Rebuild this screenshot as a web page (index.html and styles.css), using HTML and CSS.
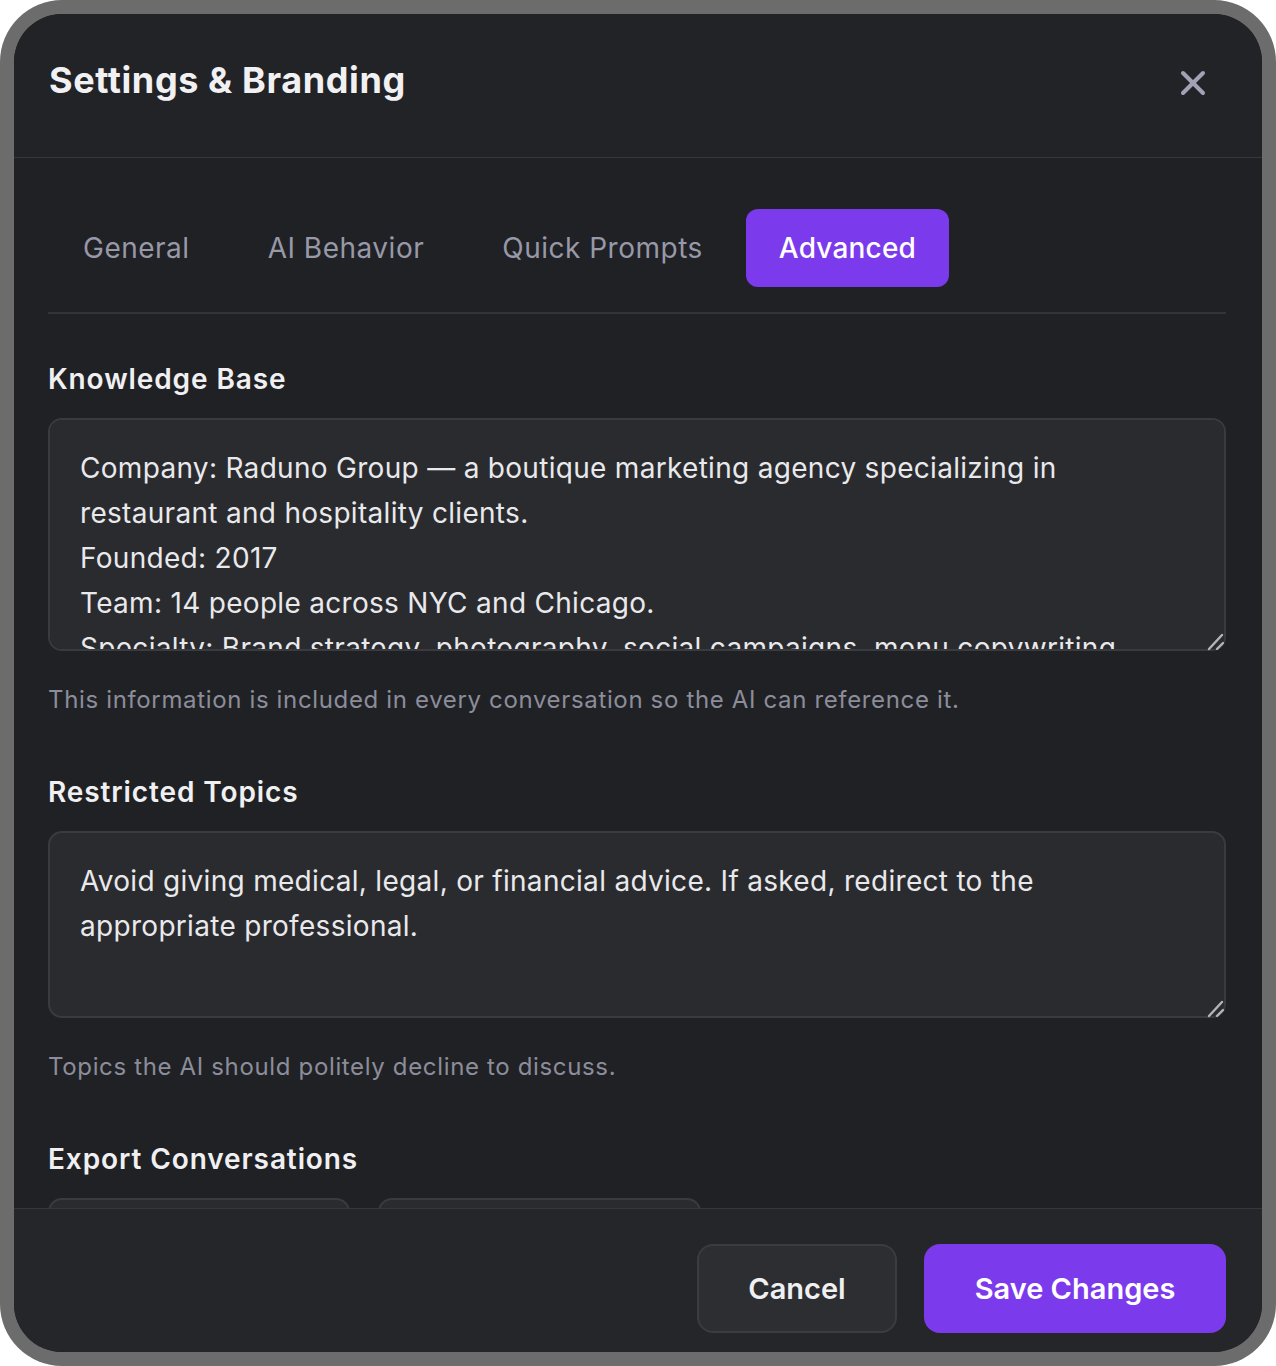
FILE: index.html
```html
<!DOCTYPE html>
<html lang="en">
<head>
    <meta charset="UTF-8">
    <meta name="viewport" content="width=device-width, initial-scale=1.0">
    <title>Settings &amp; Branding</title>
    <link rel="stylesheet" href="styles.css">
</head>
<body>
    <div class="frame">
        <div class="modal">
            <div class="modal-header">
                <h1 class="modal-title">Settings &amp; Branding</h1>
                <button class="close-btn" aria-label="Close">
                    <svg width="26" height="26" viewBox="0 0 26 26" fill="none" stroke="currentColor" stroke-width="4" stroke-linecap="round">
                        <line x1="3" y1="3" x2="23" y2="23"/>
                        <line x1="23" y1="3" x2="3" y2="23"/>
                    </svg>
                </button>
            </div>

            <div class="modal-body">
                <div class="tabs">
                    <button class="tab">General</button>
                    <button class="tab">AI Behavior</button>
                    <button class="tab">Quick Prompts</button>
                    <button class="tab active">Advanced</button>
                </div>

                <div class="field first">
                    <label class="field-label" for="kb">Knowledge Base</label>
                    <div class="input-wrap">
                        <textarea id="kb" class="field-input kb">Company: Raduno Group — a boutique marketing agency specializing in restaurant and hospitality clients.
Founded: 2017
Team: 14 people across NYC and Chicago.
Specialty: Brand strategy, photography, social campaigns, menu copywriting.
Tone: Warm, confident, never salesy.</textarea>
                        <svg class="grip" width="20" height="20" viewBox="0 0 20 20" fill="none" stroke="currentColor" stroke-width="2.4" stroke-linecap="round">
                            <line x1="4" y1="18" x2="17" y2="4"/>
                            <line x1="12" y1="18" x2="18" y2="12"/>
                        </svg>
                    </div>
                    <p class="field-help">This information is included in every conversation so the AI can reference it.</p>
                </div>

                <div class="field">
                    <label class="field-label" for="restricted">Restricted Topics</label>
                    <div class="input-wrap">
                        <textarea id="restricted" class="field-input restricted">Avoid giving medical, legal, or financial advice. If asked, redirect to the appropriate professional.</textarea>
                        <svg class="grip" width="20" height="20" viewBox="0 0 20 20" fill="none" stroke="currentColor" stroke-width="2.4" stroke-linecap="round">
                            <line x1="4" y1="18" x2="17" y2="4"/>
                            <line x1="12" y1="18" x2="18" y2="12"/>
                        </svg>
                    </div>
                    <p class="field-help">Topics the AI should politely decline to discuss.</p>
                </div>

                <div class="field">
                    <div class="field-label">Export Conversations</div>
                    <div class="export-row">
                        <button class="export-btn wide-a">JSON</button>
                        <button class="export-btn wide-b">Markdown</button>
                    </div>
                </div>
            </div>

            <div class="modal-footer">
                <button class="btn btn-secondary">Cancel</button>
                <button class="btn btn-primary">Save Changes</button>
            </div>
        </div>
    </div>
</body>
</html>
```

FILE: styles.css
```css
* {
    box-sizing: border-box;
}

body {
    margin: 0;
    background: #ffffff;
    font-family: Inter, "Noto Sans", sans-serif;
}

.frame {
    width: 1276px;
    height: 1366px;
    padding: 14px;
    background: #6c6c6c;
    border-radius: 62px;
}

.modal {
    height: 100%;
    display: flex;
    flex-direction: column;
    background: #202124;
    border-radius: 48px;
    overflow: hidden;
}

/* header */
.modal-header {
    height: 144px;
    flex-shrink: 0;
    display: flex;
    justify-content: space-between;
    align-items: flex-start;
    padding: 44px 36px 0 35px;
    background: #222326;
    border-bottom: 1px solid #36373b;
}

.modal-title {
    margin: 0;
    font-size: 36px;
    line-height: 44px;
    font-weight: 700;
    color: #f1f1f3;
    letter-spacing: 0.6px;
}

.close-btn {
    margin-top: 12px;
    margin-right: 20px;
    padding: 0;
    width: 26px;
    height: 26px;
    background: none;
    border: none;
    color: #a2a2b6;
    cursor: pointer;
}

/* body */
.modal-body {
    flex: 1;
    overflow: hidden;
    padding: 51px 36px 0 34px;
}

.tabs {
    display: flex;
    gap: 8px;
    padding-bottom: 25px;
    border-bottom: 2px solid #333438;
}

.tab {
    height: 78px;
    padding: 0 35px;
    background: none;
    border: none;
    border-radius: 12px;
    font-family: inherit;
    font-size: 28px;
    font-weight: 400;
    letter-spacing: 0.5px;
    color: #9798a8;
    cursor: pointer;
}

.tab.active {
    padding: 0 33px;
    background: #7c3aed;
    color: #ffffff;
    font-weight: 500;
    letter-spacing: 0.2px;
}

.field {
    margin-top: 58px;
}

.field.first {
    margin-top: 47px;
}

.field-label {
    display: block;
    font-size: 28px;
    line-height: 36px;
    font-weight: 600;
    letter-spacing: 0.9px;
    color: #f0f0f2;
    margin-bottom: 21px;
}

.input-wrap {
    position: relative;
}

.field-input {
    display: block;
    width: 100%;
    padding: 26px 50px 24px 30px;
    background: #2a2b2e;
    border: 2px solid #3a3b3f;
    border-radius: 14px;
    font-family: inherit;
    font-size: 28px;
    line-height: 45px;
    letter-spacing: 0.3px;
    color: #e9e9ec;
    scrollbar-width: none;
    outline: none;
    resize: none;
}

.field-input.kb {
    height: 233px;
}

.field-input.restricted {
    height: 187px;
}

/* resize grip drawn over the textarea corner */
.grip {
    position: absolute;
    right: 1px;
    bottom: 0;
    color: #b4b4b8;
    pointer-events: none;
}

.field-help {
    margin: 33px 0 0;
    font-size: 24px;
    line-height: 32px;
    letter-spacing: 0.65px;
    color: #8c8d9b;
}

.export-row {
    display: flex;
    gap: 28px;
}

.export-btn {
    height: 80px;
    padding: 0 40px;
    background: #2a2b2e;
    border: 2px solid #3a3b3f;
    border-radius: 14px;
    font-family: inherit;
    font-size: 28px;
    color: #e9e9ec;
}

.export-btn.wide-a {
    width: 302px;
}

.export-btn.wide-b {
    width: 323px;
}

/* footer */
.modal-footer {
    flex-shrink: 0;
    display: flex;
    justify-content: flex-end;
    gap: 27px;
    padding: 35px 36px 19px 34px;
    background: #252629;
    border-top: 1px solid #36373b;
}

.btn {
    height: 89px;
    border-radius: 16px;
    font-family: inherit;
    font-size: 29px;
    font-weight: 600;
    cursor: pointer;
}

.btn-secondary {
    width: 200px;
    background: #2d2e31;
    border: 2px solid #3b3c40;
    color: #f0f0f2;
}

.btn-primary {
    width: 302px;
    background: #7c3aed;
    border: none;
    color: #ffffff;
}
```
